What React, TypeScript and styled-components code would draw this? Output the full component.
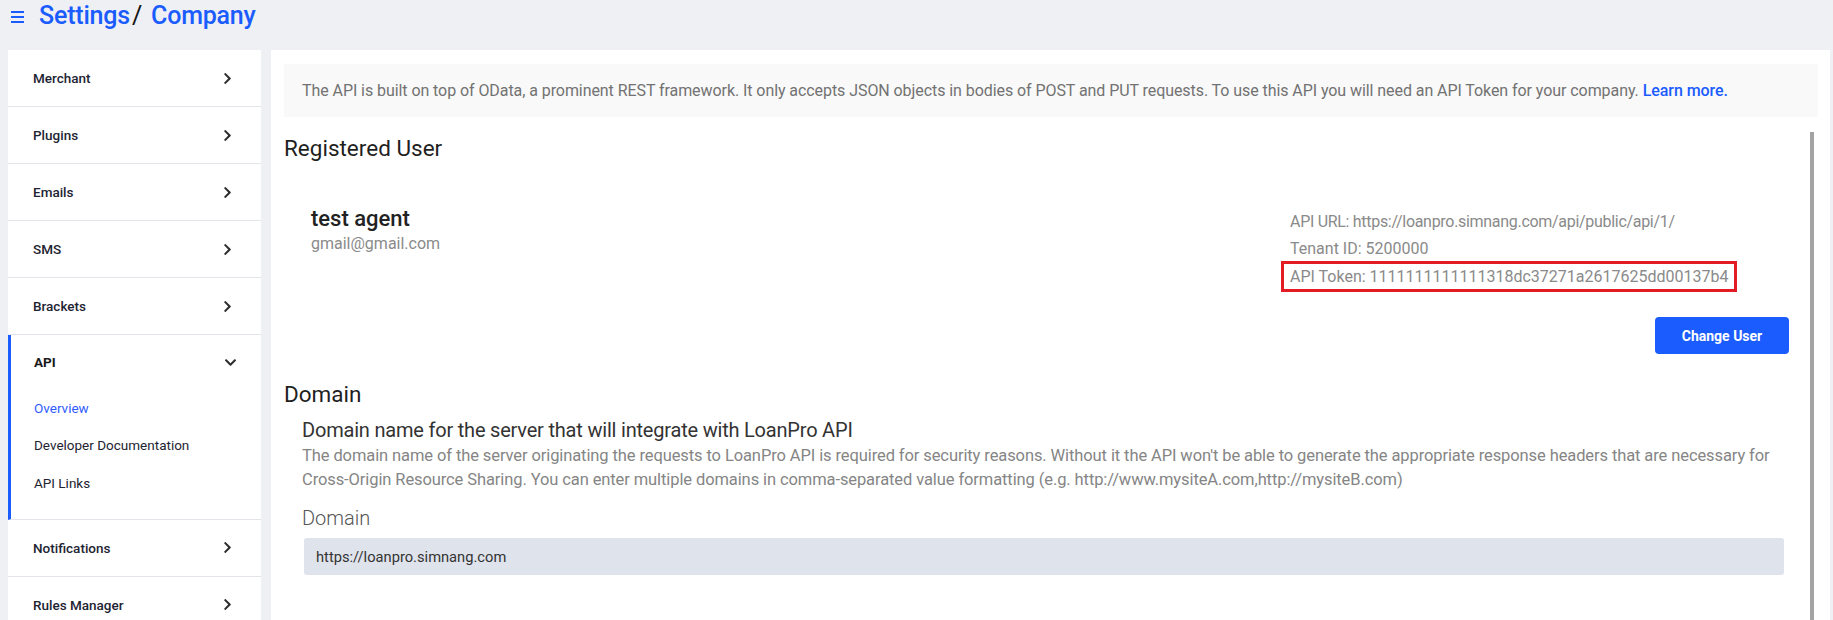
import { createGlobalStyle } from "styled-components";
import styled from "styled-components";
import { FaChevronRight, FaChevronDown } from "react-icons/fa";

const GlobalStyle = createGlobalStyle`
  html, body {
    margin: 0;
    padding: 0;
    background: #eef0f4;
    font-family: Roboto, "Liberation Sans", sans-serif;
    overflow: hidden;
  }
  * { box-sizing: border-box; }
`;

const Page = styled.div`
  height: 620px;
  display: flex;
  flex-direction: column;
`;

const Header = styled.header`
  height: 50px;
  display: flex;
  align-items: flex-start;
  padding: 3px 0 0 11px;
  gap: 15px;
`;

const MenuButton = styled.button`
  border: 0;
  background: none;
  padding: 0;
  margin-top: 8px;
  width: 13px;
  height: 12px;
  display: flex;
  cursor: pointer;
`;

const Crumbs = styled.h1`
  margin: 0;
  font-size: 25px;
  font-weight: 500;
  line-height: 26px;
  color: #1b5cff;
  letter-spacing: -0.2px;
`;

const Slash = styled.span`
  color: #111;
  font-weight: 400;
  margin: 0 9px 0 2px;
`;

const Layout = styled.div`
  flex: 1;
  display: flex;
  gap: 10px;
  padding: 0 3px 0 8px;
  min-height: 0;
`;

const Sidebar = styled.nav`
  width: 253px;
  flex-shrink: 0;
  background: #fff;
`;

const NavRow = styled.div`
  height: 57px;
  display: flex;
  align-items: center;
  justify-content: space-between;
  padding: 0 27px 0 25px;
  border-bottom: 1px solid #e3e5ea;
  font-size: 13.5px;
  font-weight: 500;
  color: #1e2432;
  cursor: pointer;

  svg {
    color: #2d2d2d;
    font-size: 13px;
  }
`;

const NavGroup = styled.div`
  border-left: 3px solid #1b5cff;
  border-bottom: 1px solid #e3e5ea;
  padding-bottom: 17px;
`;

const GroupHead = styled(NavRow)`
  padding-left: 23px;
  padding-right: 24px;
  font-weight: 700;
  color: #1a1a1a;
  border-bottom: 0;
  height: 54px;
`;

const SubItem = styled.a<{ active?: boolean }>`
  display: flex;
  align-items: center;
  height: 37.5px;
  padding-left: 23px;
  font-size: 13.5px;
  color: ${({ active }) => (active ? "#2f5cff" : "#1e2432")};
  text-decoration: none;
  cursor: pointer;
`;

const Main = styled.main`
  flex: 1;
  background: #fff;
  padding: 14px 12px 0 13px;
  display: flex;
  flex-direction: column;
  min-width: 0;
`;

const Intro = styled.div`
  background: #f9f9f9;
  height: 53px;
  display: flex;
  align-items: center;
  padding: 0 18px;
  font-size: 16px;
  color: #727272;
  letter-spacing: -0.07px;
  white-space: nowrap;
`;

const LearnMore = styled.a`
  color: #1b5cff;
  font-weight: 500;
  text-decoration: none;
  margin-left: 4px;
`;

const Body = styled.div`
  flex: 1;
  display: flex;
  gap: 21px;
  padding-right: 4px;
`;

const Content = styled.div`
  flex: 1;
  padding-top: 18px;
`;

const ScrollThumb = styled.div`
  width: 4px;
  margin-top: 15px;
  background: #a3a3a3;
`;

const SectionTitle = styled.h2`
  margin: 0;
  font-size: 22.5px;
  line-height: 26px;
  font-weight: 400;
  color: #1f1f1f;
`;

const UserRow = styled.div`
  display: grid;
  grid-template-columns: 1fr 508px;
  margin-top: 45px;
  padding-left: 27px;
`;

const UserName = styled.div`
  font-size: 22px;
  line-height: 26px;
  font-weight: 500;
  color: #222;
`;

const UserEmail = styled.div`
  font-size: 16px;
  line-height: 24px;
  color: #8a8a8a;
`;

const InfoList = styled.div`
  display: flex;
  flex-direction: column;
  align-items: flex-start;
  padding-top: 2px;
`;

const InfoLine = styled.div<{ highlight?: boolean; tight?: boolean }>`
  font-size: 16px;
  line-height: 27px;
  color: #8a8a8a;
  padding: 0 9px;
  white-space: nowrap;
  letter-spacing: ${({ tight }) => (tight ? "-0.3px" : "0")};
  ${({ highlight }) =>
    highlight &&
    `
    line-height: 25px;
    padding: 0 6px;
    margin-top: -1px;
    border: 3px solid #e31b23;
  `}
`;

const Actions = styled.div`
  display: flex;
  justify-content: flex-end;
  margin-top: 25px;
`;

const PrimaryButton = styled.button`
  width: 134px;
  height: 37px;
  border: 0;
  border-radius: 4px;
  background: #1b5cff;
  color: #fff;
  font-family: Roboto, "Liberation Sans", sans-serif;
  font-size: 14px;
  font-weight: 700;
  cursor: pointer;
`;

const DomainTitle = styled(SectionTitle)`
  margin-top: 27px;
`;

const DomainBody = styled.div`
  padding: 11px 5px 0 18px;
`;

const DomainSubtitle = styled.div`
  font-size: 20px;
  line-height: 24px;
  color: #333;
  letter-spacing: -0.2px;
`;

const DomainHelp = styled.p`
  margin: 2px 0 0;
  font-size: 16.5px;
  line-height: 24px;
  color: #858585;
  letter-spacing: -0.1px;
`;

const FieldLabel = styled.label`
  display: block;
  margin-top: 13px;
  font-size: 20px;
  line-height: 26px;
  font-weight: 300;
  color: #555;
`;

const TextInput = styled.input`
  display: block;
  width: calc(100% - 2px);
  margin: 7px 0 0 2px;
  height: 37px;
  border: 0;
  border-radius: 3px;
  background: #dfe3eb;
  padding: 0 12px;
  font-family: Roboto, "Liberation Sans", sans-serif;
  font-size: 14.7px;
  color: #333;
  outline: none;
`;

const navTop = ["Merchant", "Plugins", "Emails", "SMS", "Brackets"];
const navBottom = ["Notifications", "Rules Manager"];
const apiLinks = ["Overview", "Developer Documentation", "API Links"];

const App = () => {
  return (
    <Page>
      <GlobalStyle />
      <Header>
        <MenuButton type="button" aria-label="menu">
          <svg width="13" height="12" viewBox="0 0 13 12">
            <g stroke="#1b5cff" strokeWidth="2">
              <line x1="0" y1="1" x2="13" y2="1" />
              <line x1="0" y1="6" x2="13" y2="6" />
              <line x1="0" y1="11" x2="13" y2="11" />
            </g>
          </svg>
        </MenuButton>
        <Crumbs>
          Settings<Slash>/</Slash>Company
        </Crumbs>
      </Header>
      <Layout>
        <Sidebar>
          {navTop.map((name) => (
            <NavRow key={name}>
              {name}
              <FaChevronRight />
            </NavRow>
          ))}
          <NavGroup>
            <GroupHead>
              API
              <FaChevronDown />
            </GroupHead>
            {apiLinks.map((name, i) => (
              <SubItem key={name} active={i === 0}>
                {name}
              </SubItem>
            ))}
          </NavGroup>
          {navBottom.map((name) => (
            <NavRow key={name}>
              {name}
              <FaChevronRight />
            </NavRow>
          ))}
        </Sidebar>
        <Main>
          <Intro>
            The API is built on top of OData, a prominent REST framework. It only accepts JSON objects in
            bodies of POST and PUT requests. To use this API you will need an API Token for your company.
            <LearnMore href="#">Learn more.</LearnMore>
          </Intro>
          <Body>
            <Content>
              <SectionTitle>Registered User</SectionTitle>
              <UserRow>
                <div>
                  <UserName>test agent</UserName>
                  <UserEmail>gmail@gmail.com</UserEmail>
                </div>
                <InfoList>
                  <InfoLine tight>API URL: https://loanpro.simnang.com/api/public/api/1/</InfoLine>
                  <InfoLine>Tenant ID: 5200000</InfoLine>
                  <InfoLine highlight>API Token: 1111111111111318dc37271a2617625dd00137b4</InfoLine>
                </InfoList>
              </UserRow>
              <Actions>
                <PrimaryButton type="button">Change User</PrimaryButton>
              </Actions>
              <DomainTitle>Domain</DomainTitle>
              <DomainBody>
                <DomainSubtitle>Domain name for the server that will integrate with LoanPro API</DomainSubtitle>
                <DomainHelp>
                  The domain name of the server originating the requests to LoanPro API is required for
                  security reasons. Without it the API won't be able to generate the appropriate response
                  headers that are necessary for Cross-Origin Resource Sharing. You can enter multiple domains
                  in comma-separated value formatting (e.g. http://www.mysiteA.com,http://mysiteB.com)
                </DomainHelp>
                <FieldLabel htmlFor="domain">Domain</FieldLabel>
                <TextInput id="domain" defaultValue="https://loanpro.simnang.com" readOnly />
              </DomainBody>
            </Content>
            <ScrollThumb />
          </Body>
        </Main>
      </Layout>
    </Page>
  );
};

export default App;
